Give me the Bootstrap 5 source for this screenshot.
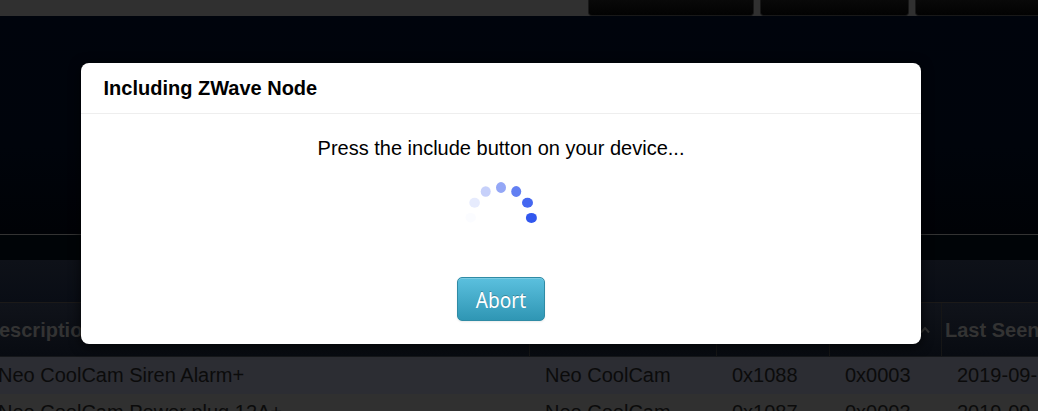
<!DOCTYPE html>
<html lang="en">
<head>
<meta charset="utf-8">
<meta name="viewport" content="width=device-width, initial-scale=1">
<title>Including ZWave Node</title>
<link href="https://cdn.jsdelivr.net/npm/bootstrap@5.3.0/dist/css/bootstrap.min.css" rel="stylesheet">
<style>
body{font-family:"Liberation Sans",Arial,sans-serif;font-size:20px;line-height:24px;height:411px;background:#000309;color:#000}
.topbar{height:16px;background:#303030;padding-left:588px;gap:6px}
.tab{height:16px;background:linear-gradient(#090909,#020202);border:1px solid #181818;border-top:0;border-radius:0 0 4px 4px}
.hero{height:219px;background:linear-gradient(#00040c,#00040b 60%,#000206);border-bottom:1px solid #333}
.strip{height:25px;background:#000407}
.toolbar-row{height:43px;background:linear-gradient(#0e1118,#090d15);border-bottom:1px solid #1c1a19}
.nodes{width:1038px;table-layout:fixed;border-collapse:separate;border-spacing:0}
.nodes th{height:54px;padding:0 3px;background:linear-gradient(#10131a,#080b11);border-right:1px solid #161616;border-bottom:1px solid #15171a;color:#333;white-space:nowrap;vertical-align:middle}
.nodes td{height:37px;padding:0 0 2px 15px;background:#2c2d33;color:#0b0b0b;white-space:nowrap;vertical-align:middle;overflow:hidden}
.nodes th:last-child{padding-right:0;border-right:0;overflow:hidden}
.nodes td:first-child{padding-left:0}
.nodes td:first-child span{margin-left:-2px}
.nodes th:first-child span{margin-left:-1px}
.nodes tr:nth-child(2) td{background:#303030}
.nodes th:first-child{padding-left:0}
.dialog-wrap{position:absolute;top:63px;left:81px;width:840px}
.dialog-box{height:281px;border:0;border-radius:8px;box-shadow:0 2px 12px rgba(0,0,0,.75)}
.dialog-title{height:51px;padding:0 22.5px;border-bottom:1px solid #eee;font-weight:700}
.message{padding-top:22px}
.loader{width:80px;height:80px;margin-top:19px}
.abort{width:88px;height:44px;margin-top:18px;padding:0 0 1px;border:1px solid #2f8ba5;border-radius:5px;background:linear-gradient(#5bc0de,#2f96b4);color:#fff;font-family:"Noto Sans","Open Sans",sans-serif;font-size:22px;line-height:28px;text-shadow:0 -1px 0 rgba(0,0,0,.25);box-shadow:inset 0 1px 0 rgba(255,255,255,.2),0 1px 2px rgba(0,0,0,.08)}
.abort:hover{color:#fff}
.abort span{display:inline-block;transform:scaleX(.87);margin:0 -8px}
</style>
</head>
<body class="overflow-hidden position-relative">
<div class="topbar d-flex overflow-hidden">
  <div class="tab flex-shrink-0" style="width:166px"></div>
  <div class="tab flex-shrink-0" style="width:149px"></div>
  <div class="tab flex-shrink-0" style="width:149px"></div>
</div>
<div class="hero"></div>
<div class="strip"></div>
<div class="toolbar-row"></div>
<table class="nodes">
  <colgroup><col style="width:530px"><col style="width:187px"><col style="width:113px"><col style="width:112px"><col></colgroup>
  <thead><tr><th><span>escription</span></th><th></th><th></th>
    <th class="text-end"><svg class="d-block ms-auto me-2" width="10" height="8" viewBox="0 0 10 8" fill="none" stroke="#333" stroke-width="2"><path d="M1 6.5 5 2l4 4.5"/></svg></th>
    <th>Last Seen</th></tr></thead>
  <tbody>
    <tr><td><span>Neo CoolCam Siren Alarm+</span></td><td>Neo CoolCam</td><td>0x1088</td><td>0x0003</td><td>2019-09-</td></tr>
    <tr><td><span>Neo CoolCam Power plug 12A+</span></td><td>Neo CoolCam</td><td>0x1087</td><td>0x0003</td><td>2019-09-</td></tr>
  </tbody>
</table>
<div class="dialog-wrap">
  <div class="dialog-box modal-content bg-white" role="dialog" aria-label="Including ZWave Node">
    <div class="dialog-title d-flex align-items-center">Including ZWave Node</div>
    <div class="d-flex flex-column align-items-center">
      <div class="message">Press the include button on your device...</div>
      <svg class="loader" viewBox="0 0 80 80" fill="#3157ee">
        <ellipse cx="9.7" cy="38.7" rx="5.2" ry="4.8" opacity=".02"/>
        <ellipse cx="13.6" cy="23.7" rx="5.3" ry="5" opacity=".12"/>
        <ellipse cx="24.7" cy="12.5" rx="5" ry="5.3" opacity=".28"/>
        <ellipse cx="40" cy="8.5" rx="5" ry="5.4" opacity=".52"/>
        <ellipse cx="55.2" cy="12.5" rx="5" ry="5.4" opacity=".76"/>
        <ellipse cx="66.5" cy="23.7" rx="5.5" ry="5" opacity=".9"/>
        <ellipse cx="70.4" cy="38.9" rx="5.5" ry="5"/>
      </svg>
      <button type="button" class="abort btn"><span>Abort</span></button>
    </div>
  </div>
</div>
<script src="https://cdn.jsdelivr.net/npm/bootstrap@5.3.0/dist/js/bootstrap.bundle.min.js"></script>
</body>
</html>
